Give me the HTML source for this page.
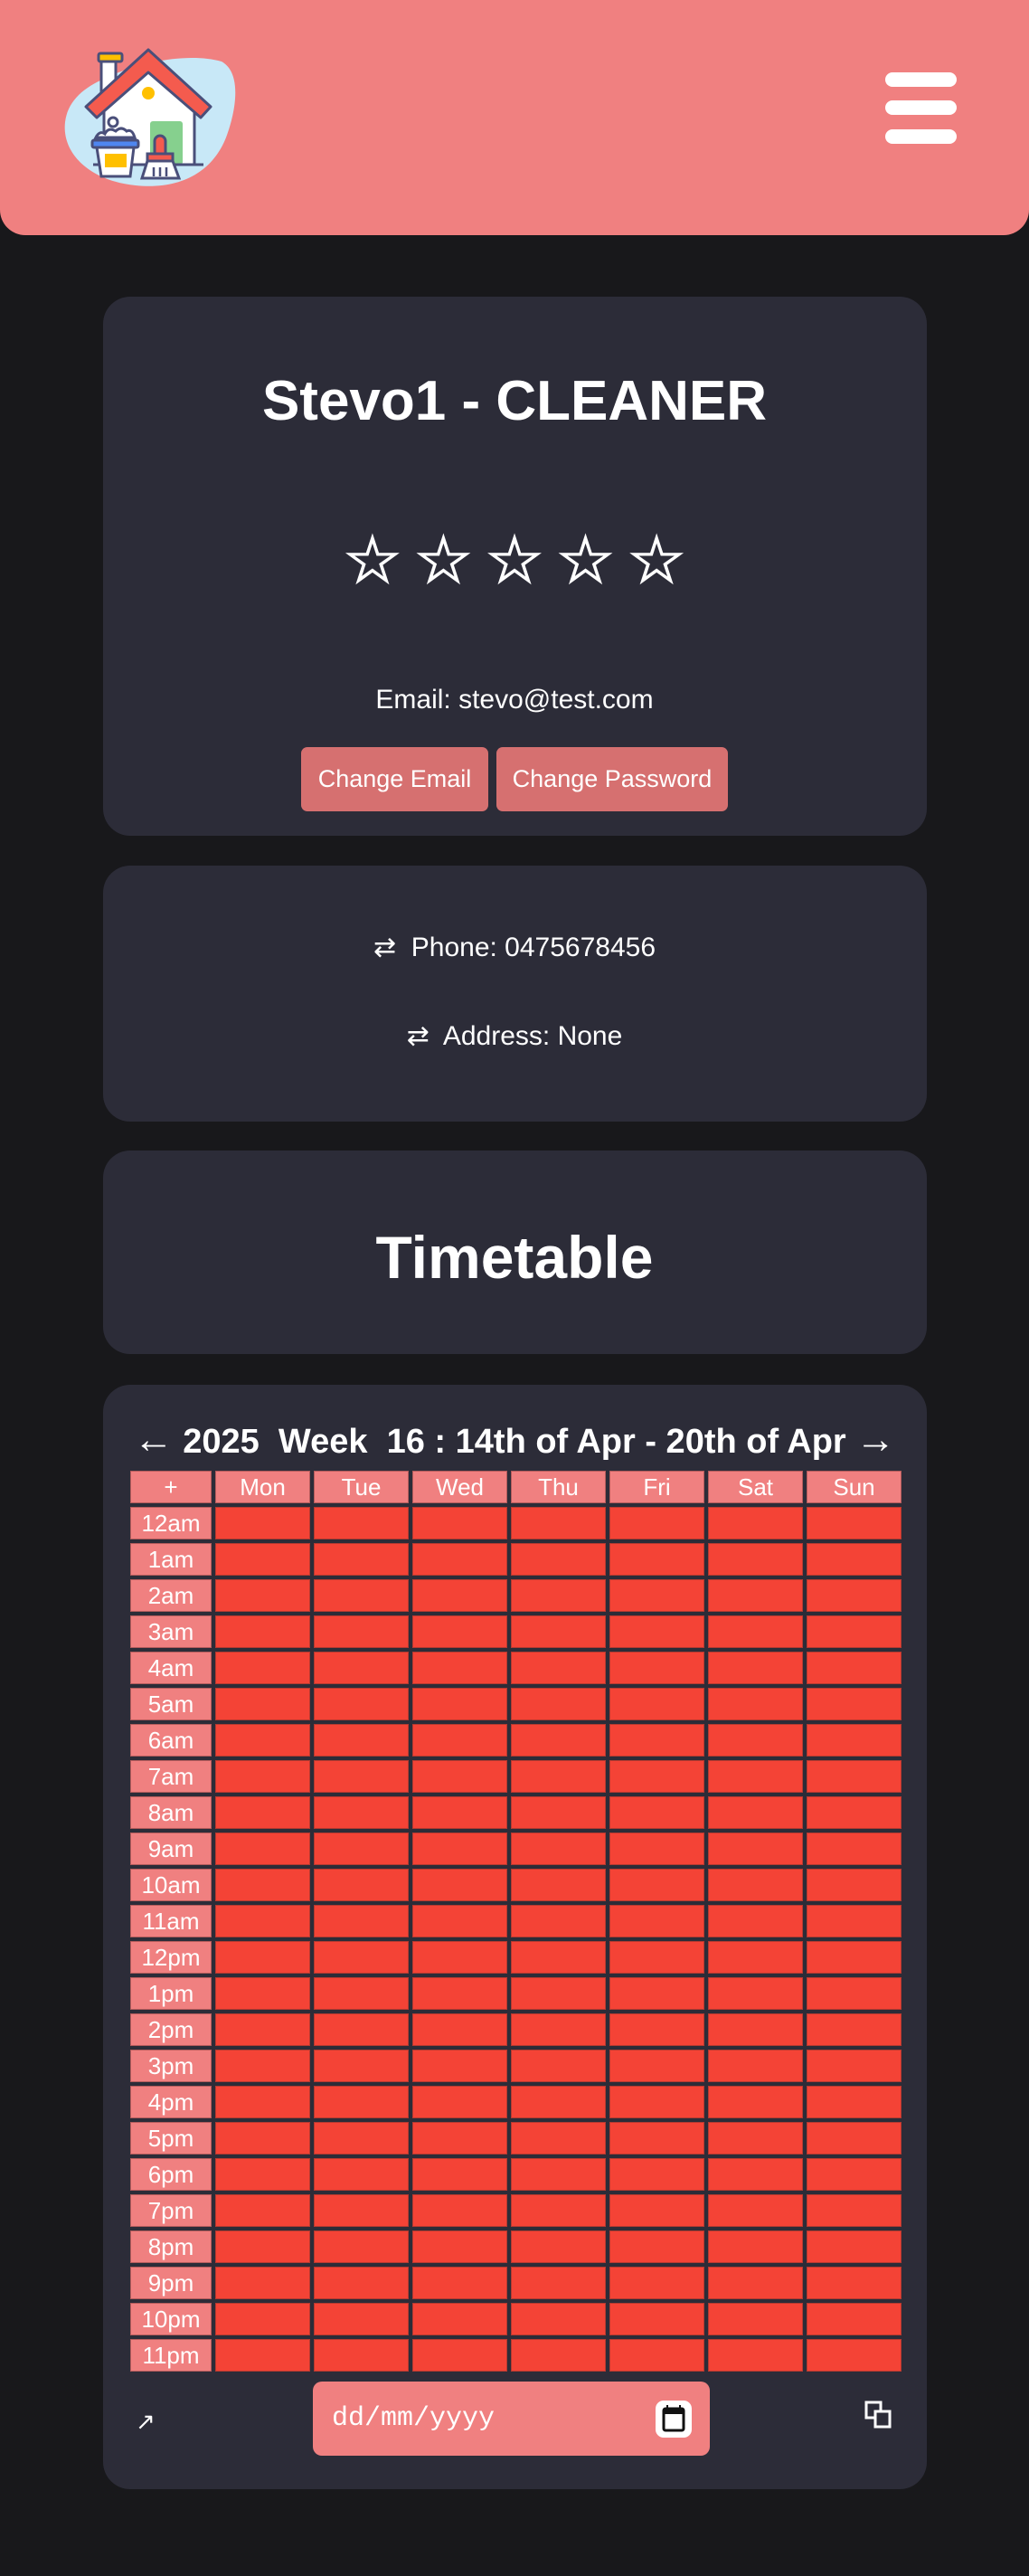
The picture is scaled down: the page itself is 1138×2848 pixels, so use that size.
<!DOCTYPE html>
<html><head><meta charset="utf-8">
<style>
*{box-sizing:border-box;margin:0;padding:0}
html,body{width:1138px;height:2848px;background:#18181b;font-family:"Liberation Sans",sans-serif;color:#fff;overflow:hidden;position:relative}
.hdr{position:absolute;left:0;top:0;width:1138px;height:260px;background:#f08080;border-radius:0 0 28px 28px}
.bar{position:absolute;left:979px;width:79px;height:16px;background:#fff;border-radius:8px}
.card{position:absolute;left:114px;width:911px;background:#2c2c38;border-radius:30px}
.c{position:absolute;left:0;width:100%;text-align:center;white-space:nowrap}
.btn{position:absolute;top:826px;height:71px;background:#d67070;border-radius:7px;font-size:27px;line-height:71px;text-align:center;color:#fff}
.grid{position:absolute;left:144px;top:1626px;display:grid;grid-template-columns:90px repeat(7,105px);grid-auto-rows:36px;gap:4px}
.grid div{font-size:26px;line-height:34px;text-align:center;color:#fff}
.h{background:#f08080;border:1px solid #b55c5c}
.r{background:#f44336;border:1px solid #b53a30}
</style></head><body>
<div class="hdr">
<svg style="position:absolute;left:60px;top:40px" width="220" height="180" viewBox="0 0 220 180">
<path d="M60,45 C95,28 150,18 185,28 C207,40 202,80 190,112 C175,150 140,170 90,165 C40,160 8,130 12,95 C15,70 35,55 60,45Z" fill="#c8e8f7"/>
<rect x="52" y="24" width="16" height="40" fill="#fff" stroke="#4a4f7a" stroke-width="3"/>
<rect x="49" y="19" width="26" height="9" rx="2" fill="#ffc000" stroke="#4a4f7a" stroke-width="3"/>
<path d="M55,70 L104,30 L155,70 V142 H55Z" fill="#fff" stroke="#4a4f7a" stroke-width="3"/>
<path d="M104,15 L173,78 L162,90 L104,40 L47,90 L35,78Z" fill="#f45b4e" stroke="#4a4f7a" stroke-width="3" stroke-linejoin="round"/>
<circle cx="104" cy="63" r="7" fill="#ffc000"/>
<circle cx="65" cy="95" r="5" fill="#fff" stroke="#4a4f7a" stroke-width="3"/>
<rect x="106" y="94" width="36" height="48" rx="3" fill="#86d08e"/>
<line x1="43" y1="142" x2="165" y2="142" stroke="#4a4f7a" stroke-width="3"/>
<path d="M46,112 q4,-8 10,-4 q4,-8 12,-3 q6,-6 12,0 q6,-3 9,7Z" fill="#fff" stroke="#4a4f7a" stroke-width="3"/>
<path d="M47,123 L52,155 H84 L88,123Z" fill="#fff" stroke="#4a4f7a" stroke-width="3"/>
<rect x="56" y="130" width="24" height="15" fill="#ffc000"/>
<rect x="42" y="115" width="51" height="8" rx="2" fill="#4f86f0" stroke="#4a4f7a" stroke-width="3"/>
<rect x="111" y="110" width="12" height="24" rx="6" fill="#f45b4e" stroke="#4a4f7a" stroke-width="3"/>
<rect x="103" y="130" width="28" height="8" fill="#f45b4e" stroke="#4a4f7a" stroke-width="3"/>
<path d="M103,138 L97,157 H138 L131,138Z" fill="#fff" stroke="#4a4f7a" stroke-width="3"/>
<path d="M110,145 V155 M117,145 V155 M124,145 V155" stroke="#4a4f7a" stroke-width="2.5"/>
</svg>
<div class="bar" style="top:80px"></div><div class="bar" style="top:111px"></div><div class="bar" style="top:143px"></div>
</div>

<div class="card" style="top:328px;height:596px"></div>
<div class="c" style="top:404px;font-size:62px;font-weight:bold;line-height:80px">Stevo1 - CLEANER</div>
<div class="c" style="top:578px;font-size:72px;line-height:84px;letter-spacing:14px;padding-left:14px;-webkit-text-stroke:1.5px #fff">☆☆☆☆☆</div>
<div class="c" style="top:755px;font-size:30px;line-height:38px">Email: stevo@test.com</div>
<div class="btn" style="left:333px;width:207px">Change Email</div>
<div class="btn" style="left:549px;width:256px">Change Password</div>

<div class="card" style="top:957px;height:283px"></div>
<div class="c" style="top:1030px;font-size:30px;line-height:36px">⇄&nbsp; Phone: 0475678456</div>
<div class="c" style="top:1128px;font-size:30px;line-height:36px">⇄&nbsp; Address: None</div>

<div class="card" style="top:1272px;height:225px"></div>
<div class="c" style="top:1350px;font-size:66px;font-weight:bold;line-height:80px">Timetable</div>

<div class="card" style="top:1531px;height:1221px"></div>
<div class="c" style="top:1568px;font-size:38px;font-weight:bold;line-height:48px"><span style="font-size:44px">←</span> 2025&nbsp; Week&nbsp; 16 : 14th of Apr - 20th of Apr <span style="font-size:44px">→</span></div>
<div class="grid">
<div class="h">+</div><div class="h">Mon</div><div class="h">Tue</div><div class="h">Wed</div><div class="h">Thu</div><div class="h">Fri</div><div class="h">Sat</div><div class="h">Sun</div>
<div class="h">12am</div><div class="r"></div><div class="r"></div><div class="r"></div><div class="r"></div><div class="r"></div><div class="r"></div><div class="r"></div>
<div class="h">1am</div><div class="r"></div><div class="r"></div><div class="r"></div><div class="r"></div><div class="r"></div><div class="r"></div><div class="r"></div>
<div class="h">2am</div><div class="r"></div><div class="r"></div><div class="r"></div><div class="r"></div><div class="r"></div><div class="r"></div><div class="r"></div>
<div class="h">3am</div><div class="r"></div><div class="r"></div><div class="r"></div><div class="r"></div><div class="r"></div><div class="r"></div><div class="r"></div>
<div class="h">4am</div><div class="r"></div><div class="r"></div><div class="r"></div><div class="r"></div><div class="r"></div><div class="r"></div><div class="r"></div>
<div class="h">5am</div><div class="r"></div><div class="r"></div><div class="r"></div><div class="r"></div><div class="r"></div><div class="r"></div><div class="r"></div>
<div class="h">6am</div><div class="r"></div><div class="r"></div><div class="r"></div><div class="r"></div><div class="r"></div><div class="r"></div><div class="r"></div>
<div class="h">7am</div><div class="r"></div><div class="r"></div><div class="r"></div><div class="r"></div><div class="r"></div><div class="r"></div><div class="r"></div>
<div class="h">8am</div><div class="r"></div><div class="r"></div><div class="r"></div><div class="r"></div><div class="r"></div><div class="r"></div><div class="r"></div>
<div class="h">9am</div><div class="r"></div><div class="r"></div><div class="r"></div><div class="r"></div><div class="r"></div><div class="r"></div><div class="r"></div>
<div class="h">10am</div><div class="r"></div><div class="r"></div><div class="r"></div><div class="r"></div><div class="r"></div><div class="r"></div><div class="r"></div>
<div class="h">11am</div><div class="r"></div><div class="r"></div><div class="r"></div><div class="r"></div><div class="r"></div><div class="r"></div><div class="r"></div>
<div class="h">12pm</div><div class="r"></div><div class="r"></div><div class="r"></div><div class="r"></div><div class="r"></div><div class="r"></div><div class="r"></div>
<div class="h">1pm</div><div class="r"></div><div class="r"></div><div class="r"></div><div class="r"></div><div class="r"></div><div class="r"></div><div class="r"></div>
<div class="h">2pm</div><div class="r"></div><div class="r"></div><div class="r"></div><div class="r"></div><div class="r"></div><div class="r"></div><div class="r"></div>
<div class="h">3pm</div><div class="r"></div><div class="r"></div><div class="r"></div><div class="r"></div><div class="r"></div><div class="r"></div><div class="r"></div>
<div class="h">4pm</div><div class="r"></div><div class="r"></div><div class="r"></div><div class="r"></div><div class="r"></div><div class="r"></div><div class="r"></div>
<div class="h">5pm</div><div class="r"></div><div class="r"></div><div class="r"></div><div class="r"></div><div class="r"></div><div class="r"></div><div class="r"></div>
<div class="h">6pm</div><div class="r"></div><div class="r"></div><div class="r"></div><div class="r"></div><div class="r"></div><div class="r"></div><div class="r"></div>
<div class="h">7pm</div><div class="r"></div><div class="r"></div><div class="r"></div><div class="r"></div><div class="r"></div><div class="r"></div><div class="r"></div>
<div class="h">8pm</div><div class="r"></div><div class="r"></div><div class="r"></div><div class="r"></div><div class="r"></div><div class="r"></div><div class="r"></div>
<div class="h">9pm</div><div class="r"></div><div class="r"></div><div class="r"></div><div class="r"></div><div class="r"></div><div class="r"></div><div class="r"></div>
<div class="h">10pm</div><div class="r"></div><div class="r"></div><div class="r"></div><div class="r"></div><div class="r"></div><div class="r"></div><div class="r"></div>
<div class="h">11pm</div><div class="r"></div><div class="r"></div><div class="r"></div><div class="r"></div><div class="r"></div><div class="r"></div><div class="r"></div>
</div>
<div style="position:absolute;left:150px;top:2660px;font-size:26px;line-height:34px">↗</div>
<div style="position:absolute;left:346px;top:2633px;width:439px;height:82px;background:#f08080;border-radius:10px"></div>
<div style="position:absolute;left:367px;top:2654px;font-family:'Liberation Mono',monospace;font-size:30px;line-height:40px;color:#fff">dd/mm/yyyy</div>
<svg style="position:absolute;left:725px;top:2654px" width="40" height="41" viewBox="0 0 40 41">
<rect x="0" y="0" width="40" height="41" rx="9" fill="#fff"/>
<rect x="9" y="9" width="22" height="24" rx="2" fill="#fff" stroke="#111" stroke-width="3"/>
<rect x="9" y="9" width="22" height="6" fill="#111"/>
<path d="M13,5 V10 M27,5 V10" stroke="#111" stroke-width="2"/>
</svg>
<svg style="position:absolute;left:956px;top:2654px" width="32" height="32" viewBox="0 0 32 32">
<rect x="2" y="2" width="16" height="17" fill="none" stroke="#fff" stroke-width="3"/>
<rect x="12" y="12" width="16" height="17" fill="#2c2c38" stroke="#fff" stroke-width="3"/>
</svg>
</body></html>
